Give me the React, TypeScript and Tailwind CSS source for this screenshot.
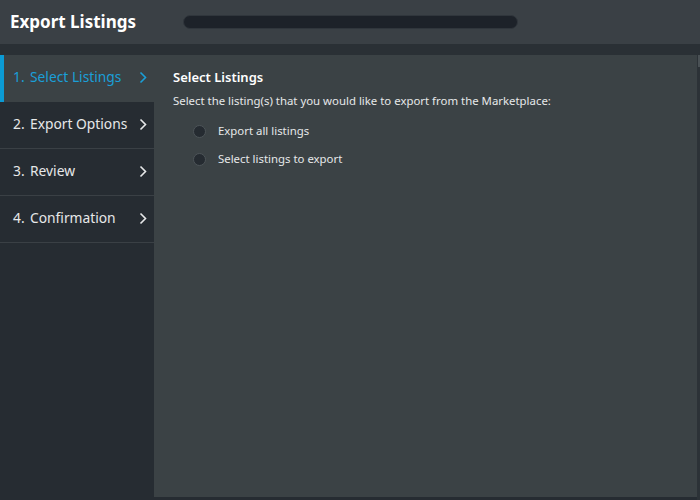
import React from 'react';
import { clsx } from 'clsx';

const steps = ['Select Listings', 'Export Options', 'Review', 'Confirmation'];

const Chevron: React.FC<{ className?: string }> = ({ className }) => (
    <svg width="8" height="13" viewBox="0 0 8 13" className={className} fill="none">
        <path d="M1.5 1.5 L6.5 6.5 L1.5 11.5" stroke="currentColor" strokeWidth="1.6" />
    </svg>
);

const Radio: React.FC<{ label: string }> = ({ label }) => (
    <label className="flex items-center h-[28px] pl-[20px]">
        <span className="w-[13px] h-[13px] rounded-full bg-[#252b31] border border-[#4d5458]" />
        <span className="ml-[12px] text-[11.4px] text-[#e6e8e9]">{label}</span>
    </label>
);

export default function App() {
    return (
        <div className="w-[700px] h-[500px] flex flex-col bg-[#262c32] overflow-hidden" style={{ fontFamily: '"Noto Sans", "Open Sans", sans-serif' }}>
            <div className="h-[44px] flex items-center bg-[#3a4045] px-[10px] shrink-0">
                <h1 className="text-[17px] font-bold text-white w-[173px]">Export Listings</h1>
                <div className="w-[335px] h-[14px] rounded-full bg-[#1d2229] border border-[#30363c]" />
            </div>
            <div className="h-[11px] bg-[#2a3035] shrink-0" />
            <div className="flex flex-1 min-h-0">
                <nav className="w-[154px] shrink-0 bg-[#262c32]">
                    {steps.map((s, i) => (
                        <div
                            key={s}
                            className={clsx(
                                'h-[47px] flex items-center justify-between pr-[7px] pb-[2px] text-[13.8px]',
                                i === 0
                                    ? 'bg-[#3b4245] text-[#1a9fd8] border-l-[4px] border-[#0b9bd5] pl-[9px]'
                                    : 'border-b border-[#3a4045] text-[#e6e8e9] pl-[13px]'
                            )}
                        >
                            <span className="flex">
                                <span className="w-[17px]">{i + 1}.</span>
                                <span>{s}</span>
                            </span>
                            <Chevron />
                        </div>
                    ))}
                </nav>
                <div className="flex flex-1 min-w-0">
                    <main className="flex-1 bg-[#3b4245] mb-[3px] pt-[12px] pl-[19px]">
                        <h2 className="text-[13px] font-semibold text-white leading-[20px]">Select Listings</h2>
                        <p className="mt-[6px] text-[11.4px] text-[#e6e8e9] leading-[16px]">
                            Select the listing(s) that you would like to export from the Marketplace:
                        </p>
                        <div className="mt-[8px]">
                            <Radio label="Export all listings" />
                            <Radio label="Select listings to export" />
                        </div>
                    </main>
                    <div className="w-[3px] flex flex-col bg-[#2c3237]">
                        <div className="h-[12px] ml-[1px] bg-[#4a5155]" />
                    </div>
                </div>
            </div>
        </div>
    );
}
